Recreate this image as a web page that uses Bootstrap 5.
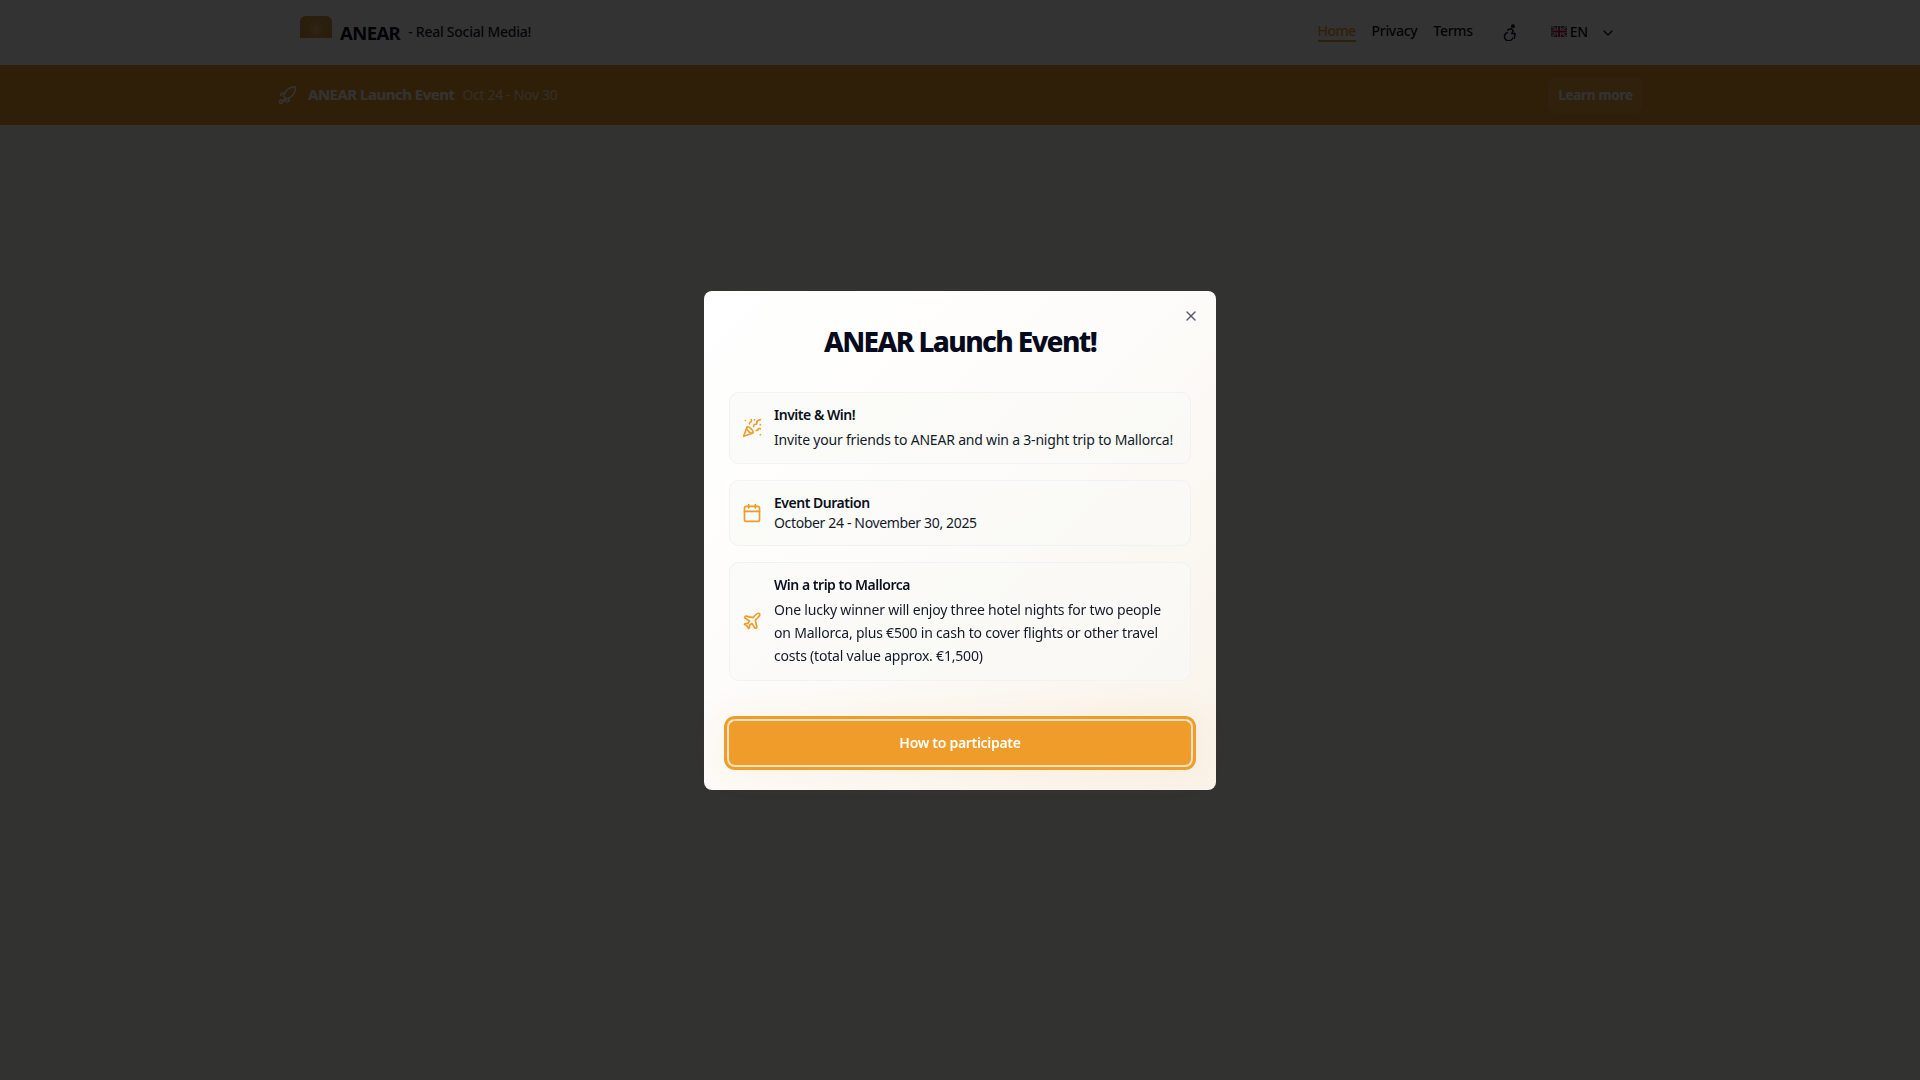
<!DOCTYPE html>
<html lang="en">
<head>
    <meta charset="UTF-8">
    <title>ANEAR</title>
    <link href="https://cdn.jsdelivr.net/npm/bootstrap@5.3.0/dist/css/bootstrap.min.css" rel="stylesheet">
    <style>
        body { font-family: "Noto Sans", "Open Sans", sans-serif; background: #fbfaf6; color: #0b1020; min-height: 1080px; font-size: 14px; letter-spacing: -.2px; }
        /* Top bar */
        .top-bar { height: 65px; background: #fff; box-shadow: 0 1px 3px rgba(0,0,0,.12); padding: 0; }
        .top-inner { width: 1320px; margin: 0 auto; height: 100%; }
        .logo-box { width: 32px; height: 22px; margin-top: -11px; border-radius: 6px 6px 0 0; background: radial-gradient(circle at 50% 60%, #e9bd7e 0, #d39a45 40%, #c98a30 100%); }
        .logo-word { font-size: 18.5px; font-weight: 700; letter-spacing: -.6px; margin-left: 8px; margin-top: 1px; color: #0b1020; }
        .logo-tag { font-size: 14px; font-weight: 500; letter-spacing: -.25px; margin-left: 8px; margin-top: -3px; color: #1a2030; }
        .top-link { color: #0b1020 !important; font-size: 14px; font-weight: 500; letter-spacing: -.3px; padding: 0 !important; line-height: 18px; border-bottom: 2px solid transparent; margin-top: -1px; }
        .top-link.active { color: #f09c2a !important; border-bottom-color: #f09c2a; letter-spacing: -.6px; }
        .lang-text { font-size: 14px; font-weight: 500; margin-top: -3px; margin-left: 3px; }
        /* Event strip */
        .event-strip { height: 60px; background: #f09c2a; color: #fff; }
        .strip-inner { width: 1366px; margin: 0 auto; height: 100%; }
        .strip-title { font-size: 15px; font-weight: 700; letter-spacing: -.5px; margin-top: -1px; margin-left: 11px; }
        .strip-date { font-size: 14px; opacity: .75; letter-spacing: -.33px; margin-top: -1px; }
        .strip-btn { width: 95px; height: 36px; padding: 0; font-size: 13.5px; font-weight: 700; letter-spacing: -.3px; color: #fff; background: rgba(255,255,255,.1); border: 0; border-radius: 8px; }
        /* Dialog */
        .modal-backdrop { --bs-backdrop-opacity: .8; }
        .modal { --bs-modal-width: 512px; }
        .event-dialog { background: linear-gradient(135deg, #fff 0%, #fdfcfa 45%, #f9f3e9 100%); border: 0; border-radius: 8px; padding: 24px 25px 25px; }
        .dialog-close { top: 17px; right: 17px; line-height: 0; border: 0; background: none; color: #555b66; }
        .dialog-title { font-size: 28px; font-weight: 800; letter-spacing: -1.6px; line-height: 36px; color: #050a1c; margin: 8px 0 0; }
        .info-list { margin-top: 33px; gap: 16px; }
        .info-box { border: 1px solid #f1f2f3; border-radius: 10px; padding: 12px; gap: 12px; background: rgba(250,249,247,.7); }
        .info-ico { flex: 0 0 20px; width: 20px; height: 20px; color: #f09c2a; }
        .info-head { font-weight: 600; letter-spacing: -.48px; line-height: 20px; color: #0b1020; }
        .info-body { line-height: 22.75px; margin-top: 4px; color: #141a2a; }
        .info-body.tight { line-height: 20px; margin-top: 0; letter-spacing: -.35px; }
        .go-wrap { margin-top: 40px; }
        .go-btn { width: 100%; height: 44px; padding: 0; border: 0; border-radius: 6px; background: #f09c2a; color: #fff; font-size: 14px; font-weight: 600; letter-spacing: -.3px; box-shadow: 0 0 0 2px #fbe3c3, 0 0 0 5px #f09c2a, 0 0 30px 10px rgba(240,156,42,.08); }
        .go-btn:hover { background: #f09c2a; color: #fff; }
    </style>
</head>
<body>

<nav class="top-bar">
    <div class="top-inner d-flex align-items-center">
        <div class="logo-box"></div>
        <span class="logo-word">ANEAR</span>
        <span class="logo-tag">- Real Social Media!</span>
        <ul class="nav ms-auto align-items-center">
            <li class="nav-item"><a class="nav-link top-link active" href="#">Home</a></li>
            <li class="nav-item ms-3"><a class="nav-link top-link" href="#">Privacy</a></li>
            <li class="nav-item ms-3"><a class="nav-link top-link" href="#">Terms</a></li>
        </ul>
        <svg width="17" height="17" viewBox="0 0 24 24" fill="none" stroke="currentColor" stroke-width="2" stroke-linecap="round" stroke-linejoin="round" style="margin-left:29px">
            <circle cx="15.500" cy="3" r="1.800" fill="currentColor"/><path d="M8 8.500l5-2 3 3-2.500 4h5l-1 6.500"/><path d="M7.500 12a6 6 0 1 0 7.500 8"/>
        </svg>
        <svg width="16" height="11" viewBox="0 0 16 11" style="margin-left:32px;margin-top:-3px">
            <rect width="16" height="11" rx="1.500" fill="#2a3f8f"/>
            <path d="M0 0 16 11M16 0 0 11" stroke="#fff" stroke-width="2.200"/>
            <path d="M0 0 16 11M16 0 0 11" stroke="#c8202f" stroke-width=".8"/>
            <path d="M8 0v11M0 5.500h16" stroke="#fff" stroke-width="3.600"/>
            <path d="M8 0v11M0 5.500h16" stroke="#c8202f" stroke-width="2"/>
        </svg>
        <span class="lang-text">EN</span>
        <svg width="16" height="16" viewBox="0 0 24 24" fill="none" stroke="currentColor" stroke-width="2" stroke-linecap="round" stroke-linejoin="round" style="margin-left:12px;margin-right:4px">
            <path d="m6 9 6 6 6-6"/>
        </svg>
    </div>
</nav>

<div class="event-strip">
    <div class="strip-inner d-flex align-items-center">
        <svg width="20" height="20" viewBox="0 0 24 24" fill="none" stroke="currentColor" stroke-width="1.800" stroke-linecap="round" stroke-linejoin="round">
            <path d="M22 2c-5 0-9.500 2.500-12 6.500L7.500 13l4 4 4.500-2.500C20 12 22.500 7 22 2z"/><path d="M9 10H5.500L4 12.500"/><path d="M14.500 15.500V19l-2.500 1.500"/><circle cx="5" cy="20" r="2"/><circle cx="9.500" cy="18" r="1.200"/>
        </svg>
        <span class="strip-title">ANEAR Launch Event</span>
        <span class="strip-date ms-2">Oct 24 - Nov 30</span>
        <button class="btn strip-btn ms-auto" type="button">Learn more</button>
    </div>
</div>

<div class="modal-backdrop show"></div>
<div class="modal d-block" tabindex="-1">
    <div class="modal-dialog modal-dialog-centered">
        <div class="modal-content event-dialog">
            <button class="dialog-close position-absolute p-0" type="button" aria-label="Close">
                <svg width="16" height="16" viewBox="0 0 24 24" fill="none" stroke="currentColor" stroke-width="2" stroke-linecap="round" stroke-linejoin="round"><path d="M18 6 6 18"/><path d="m6 6 12 12"/></svg>
            </button>
            <h2 class="dialog-title text-center">ANEAR Launch Event!</h2>
            <div class="info-list d-flex flex-column">
                <div class="info-box d-flex align-items-center">
                    <svg class="info-ico" viewBox="0 0 24 24" fill="none" stroke="currentColor" stroke-width="2" stroke-linecap="round" stroke-linejoin="round">
                        <path d="M5.800 11.300 2 22l10.700-3.790"/><path d="M4 3h.01"/><path d="M22 8h.01"/><path d="M15 2h.01"/><path d="M22 20h.01"/><path d="m22 2-2.240.75a2.900 2.900 0 0 0-1.960 3.120c.1.86-.57 1.630-1.450 1.630h-.38c-.86 0-1.600.6-1.760 1.440L14 10"/><path d="m22 13-.82-.33c-.86-.34-1.820.2-1.980 1.110c-.11.7-.72 1.220-1.430 1.220H17"/><path d="m11 2 .33.82c.34.86-.2 1.820-1.110 1.980C9.520 4.900 9 5.520 9 6.230V7"/><path d="M11 13c1.930 1.930 2.830 4.170 2 5-.83.83-3.070-.07-5-2-1.930-1.930-2.830-4.170-2-5 .83-.83 3.070.07 5 2Z"/>
                    </svg>
                    <div>
                        <div class="info-head">Invite &amp; Win!</div>
                        <div class="info-body">Invite your friends to ANEAR and win a 3-night trip to Mallorca!</div>
                    </div>
                </div>
                <div class="info-box d-flex align-items-center">
                    <svg class="info-ico" viewBox="0 0 24 24" fill="none" stroke="currentColor" stroke-width="2" stroke-linecap="round" stroke-linejoin="round">
                        <path d="M8 2v4"/><path d="M16 2v4"/><rect width="18" height="18" x="3" y="4" rx="2"/><path d="M3 10h18"/>
                    </svg>
                    <div>
                        <div class="info-head">Event Duration</div>
                        <div class="info-body tight">October 24 - November 30, 2025</div>
                    </div>
                </div>
                <div class="info-box d-flex align-items-center">
                    <svg class="info-ico" viewBox="0 0 24 24" fill="none" stroke="currentColor" stroke-width="2" stroke-linecap="round" stroke-linejoin="round">
                        <path d="M17.800 19.200 16 11l3.500-3.500C21 6 21.500 4 21 3c-1-.5-3 0-4.500 1.500L13 8 4.800 6.200c-.5-.1-.9.1-1.100.5l-.3.5c-.2.5-.1 1 .3 1.300L9 12l-2 3H4l-1 1 3 2 2 3 1-1v-3l3-2 3.500 5.300c.3.4.8.5 1.300.3l.5-.2c.4-.3.6-.7.5-1.200z"/>
                    </svg>
                    <div>
                        <div class="info-head">Win a trip to Mallorca</div>
                        <div class="info-body">One lucky winner will enjoy three hotel nights for two people on Mallorca, plus €500 in cash to cover flights or other travel costs (total value approx. €1,500)</div>
                    </div>
                </div>
            </div>
            <div class="go-wrap">
                <button class="btn go-btn" type="button">How to participate</button>
            </div>
        </div>
    </div>
</div>

<script src="https://cdn.jsdelivr.net/npm/bootstrap@5.3.0/dist/js/bootstrap.bundle.min.js"></script>
</body>
</html>
